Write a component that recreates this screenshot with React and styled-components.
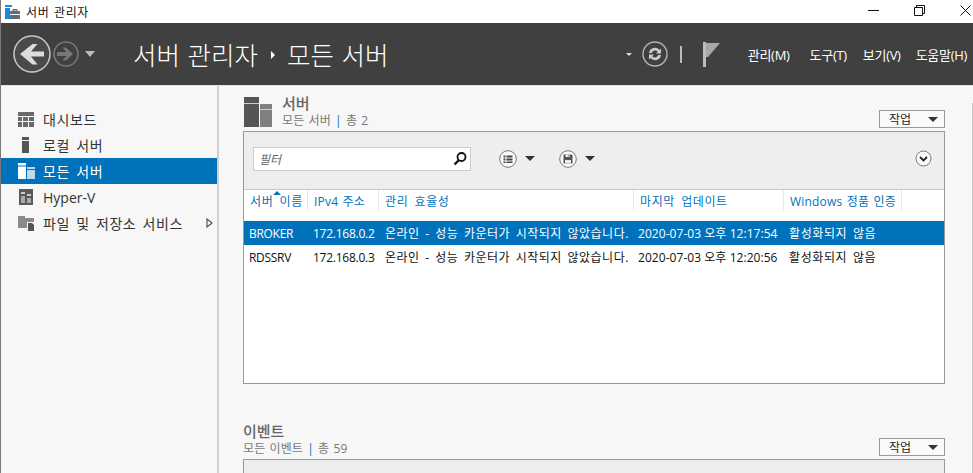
import React from 'react';
import styled, { createGlobalStyle } from 'styled-components';

const Global = createGlobalStyle`
  html, body { margin: 0; padding: 0; height: 100%; overflow: hidden; }
  body { font-family: "Open Sans", "Noto Sans CJK KR", sans-serif; background: #f7f7f7; }
  #root { height: 100%; }
`;

const Win = styled.div`
  width: 973px;
  height: 473px;
  display: flex;
  flex-direction: column;
  box-sizing: border-box;
  border-left: 1px solid #7a7a7a;
  overflow: hidden;
`;

const TitleBar = styled.div`
  height: 23px;
  flex: none;
  background: #fff;
  display: flex;
  align-items: center;
  padding-left: 4px;
  font-size: 12px;
  color: #111;
`;

const TitleText = styled.span`
  margin-left: 6px;
  letter-spacing: .6px;
  word-spacing: 1px;
`;

const WinButtons = styled.div`
  margin-left: auto;
  display: flex;
  align-items: center;
  gap: 35px;
  padding-right: 2px;
  margin-top: -3px;
`;

const Header = styled.div`
  height: 62px;
  flex: none;
  box-sizing: border-box;
  background: #404040;
  display: flex;
  align-items: center;
  color: #fff;
`;

const Nav = styled.div`
  display: flex;
  align-items: center;
  width: 132px;
  padding-left: 12px;
  box-sizing: border-box;
  gap: 2px;
  flex: none;
`;

const Crumb = styled.div`
  font-size: 25.5px;
  font-weight: 300;
  display: flex;
  align-items: center;
  word-spacing: 1px;
  margin-top: -2px;
`;

const CrumbArrow = styled.span`
  width: 0;
  height: 0;
  border-left: 4px solid #fff;
  border-top: 4px solid transparent;
  border-bottom: 4px solid transparent;
  margin: 3px 12px 0 13px;
`;

const Tools = styled.div`
  margin-left: auto;
  display: flex;
  align-items: center;
  padding-right: 6px;
`;

const Menu = styled.span`
  font-size: 13px;
  letter-spacing: -.3px;
  margin-left: ${p => p.$gap}px;
  color: #fff;
`;

const Divider = styled.span`
  width: 2px;
  height: 17px;
  margin: 0 21px 0 12px;
  background: #bbb;
`;

const Body = styled.div`
  flex: 1;
  display: flex;
  min-height: 0;
  border-top: 1px solid #e2e2e2;
`;

const Side = styled.div`
  width: 216px;
  flex: none;
  border-right: 2px solid #cfcfcf;
  padding-top: 20px;
`;

const SideItem = styled.div`
  height: 26px;
  display: flex;
  align-items: center;
  padding-left: 17px;
  font-size: 14px;
  letter-spacing: ${p => (p.$latin ? 0 : '.6px')};
  word-spacing: 2px;
  color: ${p => (p.$active ? '#fff' : '#333')};
  background: ${p => (p.$active ? '#0072bc' : 'transparent')};
`;

const SideLabel = styled.span`
  margin-left: 8px;
`;

const SideArrow = styled.svg`
  margin-left: auto;
  margin-right: 4px;
`;

const Main = styled.div`
  position: relative;
  flex: 1;
  padding: 8px 28px 0 24px;
  min-width: 0;
`;

const ScrollThumb = styled.div`
  position: absolute;
  right: 0;
  top: 17px;
  bottom: 0;
  width: 1px;
  background: #c8c8c8;
`;

const SectionHead = styled.div`
  display: flex;
  height: 37px;
`;

const HeadIcon = styled.svg`
  flex: none;
  margin: 3px 0 0 1px;
`;

const HeadText = styled.div`
  margin-left: ${p => (p.$icon ? 10 : 0)}px;
  display: flex;
  flex-direction: column;
`;

const HeadTitle = styled.div`
  font-size: 15px;
  font-weight: 500;
  line-height: 18px;
  color: #666;
`;

const HeadSub = styled.div`
  font-size: 12px;
  line-height: 18px;
  color: #777;
  word-spacing: 1px;
  letter-spacing: .1px;
`;

const Pipe = styled.span`
  color: #0072bc;
`;

const TaskButton = styled.div`
  margin-left: auto;
  align-self: flex-end;
  box-sizing: border-box;
  width: 66px;
  height: 18px;
  border: 1px solid #999;
  background: #fafafa;
  display: flex;
  align-items: center;
  justify-content: space-between;
  padding: 0 6px 0 9px;
  font-size: 12px;
  color: #222;
  margin-bottom: 3px;
`;

const DownTri = styled.span`
  width: 0;
  height: 0;
  flex: none;
  margin-left: ${p => p.$left || 0}px;
  margin-right: ${p => p.$right || 0}px;
  border-top: ${p => p.$h || 5}px solid ${p => p.$color || '#333'};
  border-left: ${p => p.$w || 5}px solid transparent;
  border-right: ${p => p.$w || 5}px solid transparent;
`;

const Panel = styled.div`
  border: 1px solid #999;
  background: #fff;
  height: 251px;
  margin-bottom: 38px;
`;

const Toolbar = styled.div`
  height: 58px;
  box-sizing: border-box;
  background: #eee;
  border-bottom: 1px solid #c8c8c8;
  display: flex;
  align-items: center;
  padding: 0 12px 4px 9px;
`;

const EventBar = styled.div`
  height: 30px;
  background: #eee;
  border: 1px solid #999;
`;

const Filter = styled.div`
  width: 218px;
  height: 24px;
  box-sizing: border-box;
  border: 1px solid #ccc;
  background: #fff;
  display: flex;
  align-items: center;
  justify-content: space-between;
  padding: 0 2px 0 5px;
  font-size: 12px;
  font-style: italic;
  color: #666;
  margin-right: 28px;
`;

const ToolGroup = styled.div`
  display: flex;
  align-items: center;
  gap: 8px;
  margin-right: 24px;
`;

const Chevron = styled.div`
  margin-left: auto;
  display: flex;
`;

const Columns = styled.div`
  display: grid;
  grid-template-columns: 64px 71px 255px 150px 118px;
  height: 31px;
`;

const ColHead = styled.div`
  position: relative;
  font-size: 12px;
  color: #0072bc;
  padding: 2px 0 0 6px;
  border-right: 1px solid #e8e8e8;
  height: 19px;
  white-space: nowrap;
  letter-spacing: ${p => (p.$latin ? '.2px' : '.6px')};
  word-spacing: ${p => (p.$latin ? '1px' : '2.5px')};
`;

const SortMark = styled.span`
  position: absolute;
  left: 29px;
  top: 1px;
  width: 0;
  height: 0;
  border-bottom: 4px solid #0072bc;
  border-left: 4px solid transparent;
  border-right: 4px solid transparent;
`;

const Row = styled.div`
  display: grid;
  grid-template-columns: 64px 71px 255px 150px 118px;
  height: 24px;
  align-items: center;
  font-size: 12px;
  white-space: nowrap;
  color: ${p => (p.$selected ? '#fff' : '#111')};
  background: ${p => (p.$selected ? '#0072bc' : '#fff')};
`;

const Cell = styled.div`
  padding-left: ${p => p.$pad}px;
  letter-spacing: ${p => p.$ls || 0}px;
  word-spacing: ${p => p.$ws || 0}px;
`;

const rows = [
  ['BROKER', '172.168.0.2', '2020-07-03 오후 12:17:54', true],
  ['RDSSRV', '172.168.0.3', '2020-07-03 오후 12:20:56', false],
];

const Back = () => (
  <svg width="38" height="38" viewBox="0 0 38 38" fill="none">
    <circle cx="19" cy="19" r="18" fill="#4a4a4a" stroke="#c8c8c8" strokeWidth="1.500" />
    <path d="M31 16.500H18l6.500-7.500H19.500L7 19l12.500 10.500h5L18 21.500h13z" fill="#dcdcdc" />
  </svg>
);

const Forward = () => (
  <svg width="26" height="26" viewBox="0 0 26 26" fill="none">
    <circle cx="13" cy="13" r="12" stroke="#777" strokeWidth="1.600" />
    <path d="M4 11h9.500L9.500 6.500h3.500L20 13l-7 6.500H9.500l4-4.500H4z" fill="#777" />
  </svg>
);

const Refresh = () => (
  <svg width="26" height="26" viewBox="0 0 26 26" fill="none">
    <circle cx="13" cy="13" r="12" stroke="#b4b4b4" strokeWidth="1.400" />
    <path d="M7 12a6 6 0 0 1 10.500-3L19 7.500v5h-5l1.800-1.800a3.500 3.500 0 0 0-6 1.300z" fill="#ccc" />
    <path d="M19 14a6 6 0 0 1-10.500 3L7 18.500v-5h5l-1.800 1.800a3.500 3.500 0 0 0 6-1.300z" fill="#ccc" />
  </svg>
);

const Flag = () => (
  <svg width="17" height="25" viewBox="0 0 17 25">
    <rect x="0" y="0" width="3" height="25" fill="#bdbdbd" />
    <path d="M3 1h14L5 15H3z" fill="#a8a8a8" />
  </svg>
);

const AppIcon = () => (
  <svg width="15" height="14" viewBox="0 0 15 14">
    <rect x="0" y="0" width="7" height="2" fill="#1c8ad6" />
    <rect x="0" y="3" width="5" height="11" fill="#1c8ad6" />
    <rect x="5" y="6" width="10" height="8" fill="#5a6f80" />
    <rect x="5" y="9" width="10" height="1" fill="#fff" />
    <rect x="8" y="4.500" width="4" height="1.500" fill="none" stroke="#5a6f80" />
  </svg>
);

const GridIcon = () => (
  <svg width="17" height="15" viewBox="0 0 17 15" fill="#6a6a6a">
    <rect width="16" height="4" />
    <rect y="5" width="4" height="4" />
    <rect x="5" y="5" width="5" height="4" />
    <rect x="11" y="5" width="5" height="4" />
    <rect y="10" width="4" height="5" />
    <rect x="5" y="10" width="5" height="5" />
    <rect x="11" y="10" width="5" height="5" />
  </svg>
);

const LocalIcon = () => (
  <svg width="17" height="16" viewBox="0 0 17 16" fill="#555">
    <rect x="4" width="7" height="3" />
    <rect x="4" y="4" width="7" height="12" />
  </svg>
);

const AllIcon = () => (
  <svg width="17" height="16" viewBox="0 0 17 16">
    <rect width="8" height="2.500" fill="#fff" />
    <rect y="3.500" width="8" height="12.500" fill="#fff" />
    <rect x="9" y="4" width="8" height="2" fill="#bcd9ee" />
    <rect x="9" y="7" width="8" height="9" fill="#bcd9ee" />
  </svg>
);

const HyperIcon = () => (
  <svg width="17" height="16" viewBox="0 0 17 16">
    <rect x="1" width="14" height="16" fill="#5a5a5a" />
    <rect x="3" y="3" width="4" height="2" fill="#ccc" />
    <rect x="3" y="7" width="4" height="7" fill="#aaa" />
    <rect x="9" y="5" width="4" height="2" fill="#ccc" />
    <rect x="9" y="9" width="4" height="5" fill="#aaa" />
  </svg>
);

const FilesIcon = () => (
  <svg width="17" height="16" viewBox="0 0 17 16">
    <rect y="1" width="7" height="2" fill="#8a8a8a" />
    <rect y="3" width="16" height="10" fill="#8a8a8a" />
    <rect x="9" y="7" width="8" height="9" fill="#f7f7f7" />
    <path d="M10 8h4l2 2v6h-6z" fill="#555" />
  </svg>
);

const Search = () => (
  <svg width="16" height="16" viewBox="0 0 16 16" fill="none">
    <circle cx="9.500" cy="6" r="4" stroke="#111" strokeWidth="1.800" />
    <path d="M7 9l-4.500 4.500" stroke="#111" strokeWidth="2.400" />
  </svg>
);

const ListRound = () => (
  <svg width="18" height="18" viewBox="0 0 18 18" fill="none">
    <circle cx="9" cy="9" r="8.300" fill="#fafafa" stroke="#777" />
    <path d="M4.500 5.500h2v2h-2zM7.500 5.500h6v2h-6zM4.500 8.500h2v2h-2zM7.500 8.500h6v2h-6zM4.500 11.500h2v1.500h-2zM7.500 11.500h6v1.500h-6z" fill="#444" />
  </svg>
);

const SaveRound = () => (
  <svg width="18" height="18" viewBox="0 0 18 18" fill="none">
    <circle cx="9" cy="9" r="8.300" fill="#fafafa" stroke="#777" />
    <path d="M4.500 4.500h8l1 1v8h-9z" fill="#555" />
    <path d="M6.500 4.500h4.500v2.500H6.500z" fill="#e8e8e8" />
    <path d="M9.500 5h1v1.500h-1z" fill="#555" />
    <path d="M6 10h6v3.500H6z" fill="#e8e8e8" />
  </svg>
);

const ChevronRound = () => (
  <svg width="17" height="17" viewBox="0 0 17 17" fill="none">
    <circle cx="8.500" cy="8.500" r="7.500" fill="#fafafa" stroke="#777" />
    <path d="M5 7l3.500 3.500L12 7" stroke="#222" strokeWidth="1.800" />
  </svg>
);

const Minimize = () => (
  <svg width="11" height="11" viewBox="0 0 11 11"><path d="M0 5.500h11" stroke="#111" /></svg>
);
const Restore = () => (
  <svg width="11" height="11" viewBox="0 0 11 11" fill="none"><path d="M.5 2.500h8v8h-8zM2.500 2.500v-2h8v8h-2" stroke="#111" /></svg>
);
const Close = () => (
  <svg width="11" height="11" viewBox="0 0 11 11"><path d="M.5.500l10 10M10.500.500l-10 10" stroke="#111" /></svg>
);

export default function App() {
  return (
    <Win>
      <Global />
      <TitleBar>
        <AppIcon />
        <TitleText>서버 관리자</TitleText>
        <WinButtons>
          <Minimize />
          <Restore />
          <Close />
        </WinButtons>
      </TitleBar>
      <Header>
        <Nav>
          <Back />
          <Forward />
          <DownTri $color="#bbb" $h={6} $left={4} />
        </Nav>
        <Crumb>
          서버 관리자<CrumbArrow />모든 서버
        </Crumb>
        <Tools>
          <DownTri $color="#ddd" $h={3} $w={3} $right={10} />
          <Refresh />
          <Divider />
          <Flag />
          <Menu $gap={28}>관리(M)</Menu>
          <Menu $gap={20}>도구(T)</Menu>
          <Menu $gap={16}>보기(V)</Menu>
          <Menu $gap={15}>도움말(H)</Menu>
        </Tools>
      </Header>
      <Body>
        <Side>
          <SideItem><GridIcon /><SideLabel>대시보드</SideLabel></SideItem>
          <SideItem><LocalIcon /><SideLabel>로컬 서버</SideLabel></SideItem>
          <SideItem $active><AllIcon /><SideLabel>모든 서버</SideLabel></SideItem>
          <SideItem $latin><HyperIcon /><SideLabel>Hyper-V</SideLabel></SideItem>
          <SideItem>
            <FilesIcon />
            <SideLabel>파일 및 저장소 서비스</SideLabel>
            <SideArrow width="7" height="10" viewBox="0 0 7 10" fill="none">
              <path d="M1 1l5 4-5 4z" stroke="#555" strokeWidth="1.200" />
            </SideArrow>
          </SideItem>
        </Side>
        <Main>
          <ScrollThumb />
          <SectionHead>
            <HeadIcon width="28" height="30" viewBox="0 0 28 30">
              <rect width="15" height="30" fill="#555" />
              <rect y="6" width="15" height="1" fill="#ccc" />
              <rect x="16" y="7" width="12" height="23" fill="#808080" />
              <rect x="16" y="12" width="12" height="1" fill="#ccc" />
            </HeadIcon>
            <HeadText $icon>
              <HeadTitle>서버</HeadTitle>
              <HeadSub>모든 서버 <Pipe>|</Pipe> 총 2</HeadSub>
            </HeadText>
            <TaskButton>작업<DownTri /></TaskButton>
          </SectionHead>
          <Panel>
            <Toolbar>
              <Filter>필터<Search /></Filter>
              <ToolGroup><ListRound /><DownTri /></ToolGroup>
              <ToolGroup><SaveRound /><DownTri /></ToolGroup>
              <Chevron><ChevronRound /></Chevron>
            </Toolbar>
            <Columns>
              <ColHead>서버 이름<SortMark /></ColHead>
              <ColHead $latin>IPv4 주소</ColHead>
              <ColHead>관리 효율성</ColHead>
              <ColHead>마지막 업데이트</ColHead>
              <ColHead $latin>Windows 정품 인증</ColHead>
            </Columns>
            {rows.map(r => (
              <Row key={r[0]} $selected={r[3]}>
                <Cell $pad={5} $ls={-0.3}>{r[0]}</Cell>
                <Cell $pad={5} $ls={-0.25}>{r[1]}</Cell>
                <Cell $pad={6} $ls={0.5} $ws={2}>온라인 - 성능 카운터가 시작되지 않았습니다.</Cell>
                <Cell $pad={4} $ls={0.05}>{r[2]}</Cell>
                <Cell $pad={5} $ls={0.6} $ws={2}>활성화되지 않음</Cell>
              </Row>
            ))}
          </Panel>
          <SectionHead>
            <HeadText>
              <HeadTitle>이벤트</HeadTitle>
              <HeadSub>모든 이벤트 <Pipe>|</Pipe> 총 59</HeadSub>
            </HeadText>
            <TaskButton>작업<DownTri /></TaskButton>
          </SectionHead>
          <EventBar />
        </Main>
      </Body>
    </Win>
  );
}
